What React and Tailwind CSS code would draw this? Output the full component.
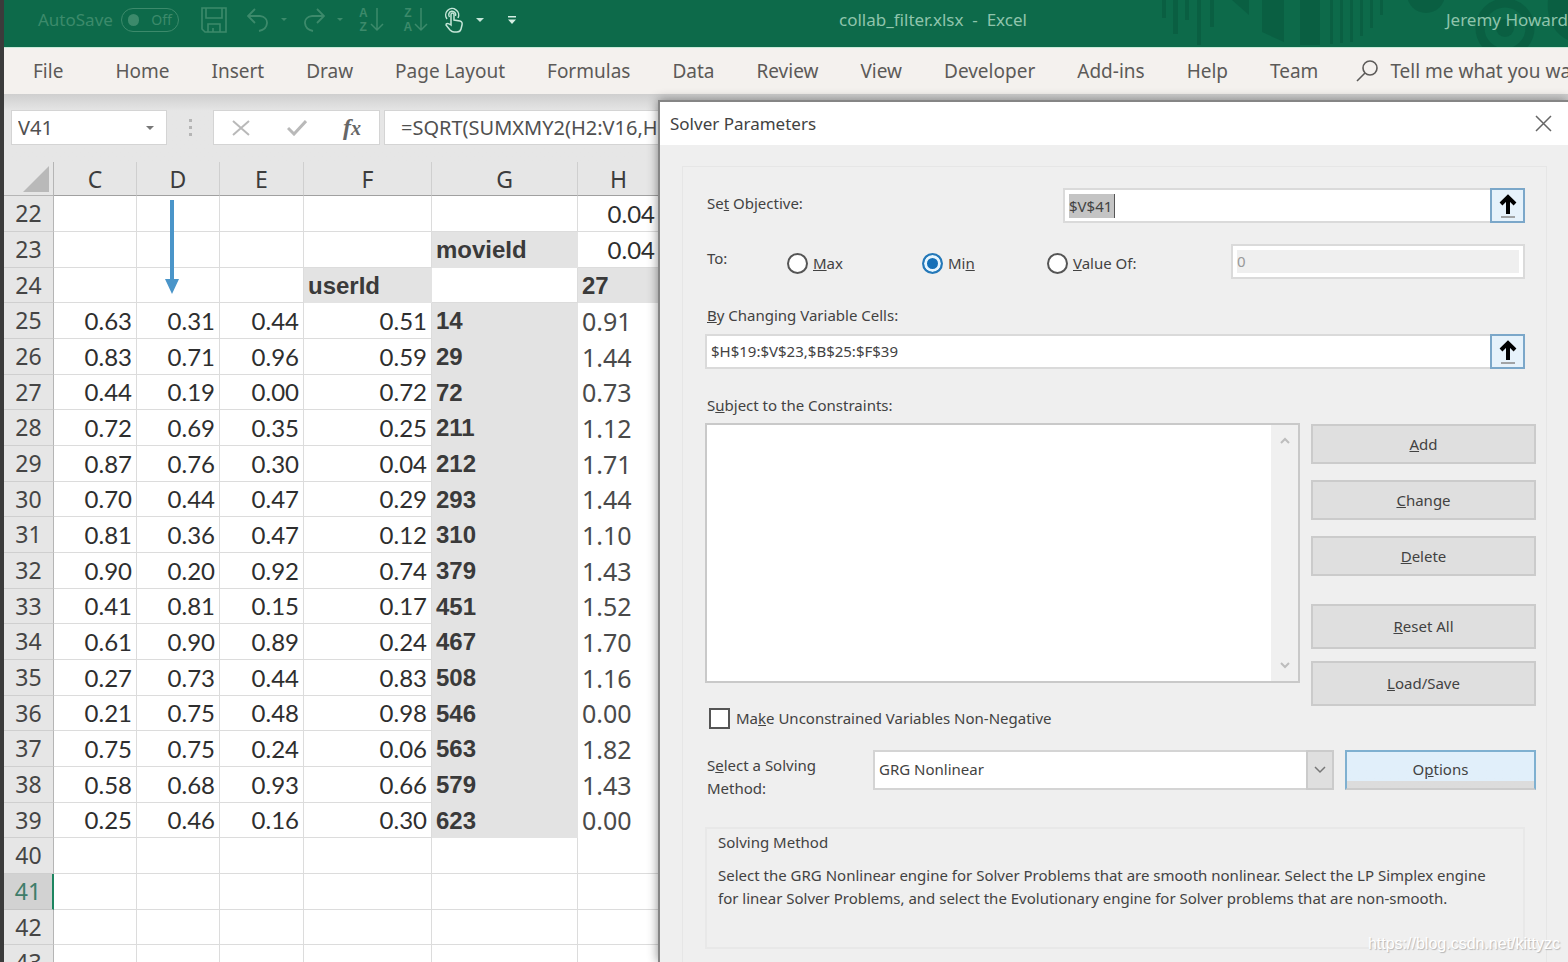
import { useState } from "react";

const tabs = [
  "Home",
  "Insert",
  "Draw",
  "Page Layout",
  "Formulas",
  "Data",
  "Review",
  "View",
  "Developer",
  "Add-ins",
  "Help",
  "Team",
];

const columns = [
  { name: "C", width: "w-[83px]" },
  { name: "D", width: "w-[83px]" },
  { name: "E", width: "w-[84px]" },
  { name: "F", width: "w-[128px]" },
  { name: "G", width: "w-[146px]" },
  { name: "H", width: "w-[82px]" },
];

// row number, then cells C to H
const rows = [
  [22, "", "", "", "", "", "0.04"],
  [23, "", "", "", "", "movieId", "0.04"],
  [24, "", "", "", "userId", "", "27"],
  [25, "0.63", "0.31", "0.44", "0.51", "14", "0.91"],
  [26, "0.83", "0.71", "0.96", "0.59", "29", "1.44"],
  [27, "0.44", "0.19", "0.00", "0.72", "72", "0.73"],
  [28, "0.72", "0.69", "0.35", "0.25", "211", "1.12"],
  [29, "0.87", "0.76", "0.30", "0.04", "212", "1.71"],
  [30, "0.70", "0.44", "0.47", "0.29", "293", "1.44"],
  [31, "0.81", "0.36", "0.47", "0.12", "310", "1.10"],
  [32, "0.90", "0.20", "0.92", "0.74", "379", "1.43"],
  [33, "0.41", "0.81", "0.15", "0.17", "451", "1.52"],
  [34, "0.61", "0.90", "0.89", "0.24", "467", "1.70"],
  [35, "0.27", "0.73", "0.44", "0.83", "508", "1.16"],
  [36, "0.21", "0.75", "0.48", "0.98", "546", "0.00"],
  [37, "0.75", "0.75", "0.24", "0.06", "563", "1.82"],
  [38, "0.58", "0.68", "0.93", "0.66", "579", "1.43"],
  [39, "0.25", "0.46", "0.16", "0.30", "623", "0.00"],
  [40, "", "", "", "", "", ""],
  [41, "", "", "", "", "", ""],
  [42, "", "", "", "", "", ""],
  [43, "", "", "", "", "", ""],
];

const LABEL =
  "border-0 bg-[#e3e3e3] pl-1 text-left font-['Liberation_Sans',sans-serif] text-2xl font-bold text-[#3a3a3a]";
const RESULT = "border-0 bg-white pl-1 text-left font-['Noto_Sans',sans-serif] text-[25px] text-[#4a4a4a]";
const NUMBER =
  "border-r border-b border-[#dcdcdc] pr-1 text-right font-[Lato,sans-serif] text-2xl text-[#2e2e2e]";

function cellClass(row, col) {
  if (row === 24 && (col === 3 || col === 5)) return LABEL;
  if (row >= 25 && row <= 39 && col === 5) return RESULT;
  if (row === 23 && col === 4) return LABEL;
  if (row >= 25 && row <= 39 && col === 4) return LABEL;
  return NUMBER;
}

function Caret({ className }) {
  return (
    <svg className={className} width="8" height="4" viewBox="0 0 8 4" fill="currentColor">
      <path d="M0 0h8L4 4z" />
    </svg>
  );
}

function SortIcon({ top, bottom }) {
  return (
    <span className="flex items-center gap-0.5">
      <span className="flex flex-col font-['Liberation_Sans',sans-serif] text-xs leading-[14px] font-bold">
        <span>{top}</span>
        <span>{bottom}</span>
      </span>
      <svg width="14" height="26" viewBox="0 0 14 26" fill="none" stroke="currentColor" strokeWidth="1.5">
        <path d="M7 1v22M1 17l6 6 6-6" />
      </svg>
    </span>
  );
}

function TitlePattern() {
  return (
    <svg
      className="absolute top-0 right-0"
      width="418"
      height="47"
      viewBox="0 0 418 47"
      fill="#095c40"
      opacity="0.75"
    >
      <path d="M12 0h4v18h-4zM23 0h5v34h-5zM35 0h4v20h-4zM47 0h4v45h-4zM60 0h4v27h-4z" />
      <path d="M82 0h17v15z" />
      <path d="M112 0h22v42l-22-10zM150 0h20v45h-20z" />
      <path d="M180 0h3v44h-3zM190 0h3v43h-3zM200 0h3v42h-3zM210 0h3v36h-3zM220 0h3v28h-3zM230 0h3v15h-3z" />
      <circle cx="276" cy="-6" r="19" />
      <circle cx="355" cy="28" r="25" fill="none" stroke="#095c40" strokeWidth="9" />
      <circle cx="355" cy="28" r="9" />
      <path d="M398 0h20v40c-14-6-22-22-20-40z" />
    </svg>
  );
}

function TitleBar() {
  return (
    <header className="relative flex h-[47px] shrink-0 items-center bg-[#0d6a4a] pb-2 pl-[34px] text-[#3c8a6b]">
      <TitlePattern />
      <span className="text-[17px]">AutoSave</span>
      <button
        type="button"
        aria-label="AutoSave"
        className="ml-2 flex h-6 w-[58px] items-center gap-3 rounded-full border border-current px-1.5 text-sm"
      >
        <span className="size-3 rounded-full bg-current" />
        Off
      </button>
      <button type="button" aria-label="Save" className="ml-[22px]">
        <svg width="26" height="26" viewBox="0 0 26 26" fill="none" stroke="currentColor" strokeWidth="1.6">
          <path d="M1 1h24v24H4l-3-3zM5 1v10h16V1M7 25v-8h12v8M12 25v-4" />
        </svg>
      </button>
      <button type="button" aria-label="Undo" className="ml-5 flex items-center gap-3">
        <svg width="22" height="24" viewBox="0 0 22 24" fill="none" stroke="currentColor" strokeWidth="1.8">
          <path d="M8 1L1 8l7 7M1 8h12c10 1 9 13-1 15" />
        </svg>
        <Caret className="h-[3px] w-1.5" />
      </button>
      <button type="button" aria-label="Redo" className="ml-4 flex items-center gap-3">
        <svg width="22" height="24" viewBox="0 0 22 24" fill="none" stroke="currentColor" strokeWidth="1.8">
          <path d="M14 1l7 7-7 7M21 8H9c-10 1-9 13 1 15" />
        </svg>
        <Caret className="h-[3px] w-1.5" />
      </button>
      <button type="button" aria-label="Sort ascending" className="ml-4">
        <SortIcon top="A" bottom="Z" />
      </button>
      <button type="button" aria-label="Sort descending" className="ml-5">
        <SortIcon top="Z" bottom="A" />
      </button>
      <button type="button" aria-label="Touch mode" className="ml-4 flex items-center gap-3 text-[#c5e6d8]">
        <svg width="20" height="26" viewBox="0 0 20 26" fill="none" stroke="currentColor" strokeWidth="1.5">
          <path d="M3 12a6.500 6.500 0 1 1 11-1" />
          <path d="M5.500 10a3.500 3.500 0 1 1 6-1" />
          <path d="M7 17V7.500a1.500 1.500 0 0 1 3 0V13l6 1c2 .5 2.500 2 2 4l-1 4c-.5 2-2 3-4 3h-3c-2 0-3-1-4-2l-4-5c0-2 2-2 5 0z" />
        </svg>
        <Caret />
      </button>
      <button type="button" aria-label="Customize toolbar" className="ml-6 text-[#d5efe4]">
        <svg width="8" height="8" viewBox="0 0 8 8" fill="currentColor">
          <path d="M0 0h8v1.500H0zM0 3.500h8L4 8z" />
        </svg>
      </button>
      <h1 className="absolute left-[835px] text-[17px] whitespace-pre text-[#8fc4ac]">
        collab_filter.xlsx  -  Excel
      </h1>
      <span className="absolute right-0 text-[17px] text-[#8fc4ac]">Jeremy Howard</span>
    </header>
  );
}

function Ribbon() {
  return (
    <nav className="flex h-[47px] shrink-0 items-center border-t border-[#c9ead9] bg-[#f4f1ee] pl-[29px] text-[19px] whitespace-nowrap text-[#5c5a58]">
      <button type="button" className="mr-13">
        File
      </button>
      <div className="flex gap-[42px]">
        {tabs.map((tab) => (
          <button key={tab} type="button">
            {tab}
          </button>
        ))}
      </div>
      <button type="button" className="ml-[38px] flex items-center gap-3">
        <svg width="22" height="22" viewBox="0 0 22 22" fill="none" stroke="currentColor" strokeWidth="1.6">
          <circle cx="14" cy="8" r="7" />
          <path d="M9 13l-8 8" />
        </svg>
        Tell me what you want to do
      </button>
    </nav>
  );
}

function FormulaBar() {
  return (
    <div className="flex h-[68px] shrink-0 items-start bg-linear-to-b from-[#cfcfcf] to-[#e6e6e6] to-25% pt-4 pl-[7px] text-xl text-[#505050]">
      <div className="flex h-[35px] w-[156px] items-center justify-between border border-[#d4d4d4] bg-white pr-3 pl-1.5">
        <input aria-label="Name box" defaultValue="V41" className="w-24 outline-none" />
        <Caret className="text-[#777]" />
      </div>
      <div className="flex h-[35px] w-[46px] flex-col items-center justify-center gap-1">
        <span className="size-[3px] bg-[#b5b5b5]" />
        <span className="size-[3px] bg-[#b5b5b5]" />
        <span className="size-[3px] bg-[#b5b5b5]" />
      </div>
      <div className="flex h-[35px] w-[167px] items-center justify-between border border-[#d4d4d4] bg-white px-[18px] text-[#b9b9b9]">
        <button type="button" aria-label="Cancel">
          <svg width="18" height="16" viewBox="0 0 18 16" fill="none" stroke="currentColor" strokeWidth="2">
            <path d="M1 1l16 14M17 1L1 15" />
          </svg>
        </button>
        <button type="button" aria-label="Enter">
          <svg width="20" height="16" viewBox="0 0 20 16" fill="none" stroke="currentColor" strokeWidth="3">
            <path d="M1 8l6 6L19 1" />
          </svg>
        </button>
        <button
          type="button"
          aria-label="Insert function"
          className="font-['Liberation_Serif',serif] text-2xl leading-none font-bold text-[#666] italic"
        >
          f<span className="text-xl">x</span>
        </button>
      </div>
      <input
        aria-label="Formula"
        defaultValue="=SQRT(SUMXMY2(H2:V16,H25:V39)/COUNT(H2:V16))"
        className="ml-1 h-[35px] flex-1 border border-[#d4d4d4] bg-white pl-4 outline-none"
      />
    </div>
  );
}

function Sheet() {
  return (
    <main className="relative flex-1 overflow-hidden bg-white">
      <table className="w-[656px] table-fixed border-separate border-spacing-0">
        <thead>
          <tr className="h-[34px] bg-[#e6e6e6] text-[23px] leading-8 text-[#3c3c3c]">
            <th className="w-[50px] border-r border-b border-[#b5b5b5] p-0">
              <svg className="ml-[19px]" width="26" height="26" viewBox="0 0 26 26" fill="#b9b9b9">
                <path d="M26 0v26H0z" />
              </svg>
            </th>
            {columns.map((column) => (
              <th
                key={column.name}
                className={`${column.width} border-r border-b border-r-[#cfcfcf] border-b-[#a0a0a0] p-0 font-normal`}
              >
                {column.name}
              </th>
            ))}
          </tr>
        </thead>
        <tbody>
          {rows.map(([number, ...cells], i) => (
            <tr key={number} className={i % 3 === 2 ? "h-[35px]" : "h-9"}>
              <th
                className={
                  number === 41
                    ? "border-r-2 border-b border-r-[#1d8560] border-b-[#c4c4c4] bg-[#d2d2d2] p-0 text-[23px] leading-none font-normal text-[#3f7d6a]"
                    : "border-r border-b border-r-[#b5b5b5] border-b-[#cfcfcf] bg-[#e6e6e6] p-0 text-[23px] leading-none font-normal text-[#454545]"
                }
              >
                {number}
              </th>
              {cells.map((cell, col) => (
                <td key={col} className={`p-0 leading-none ${cellClass(number, col)}`}>
                  {cell}
                </td>
              ))}
            </tr>
          ))}
        </tbody>
      </table>
      {/* arrow drawn on top of column D */}
      <svg className="absolute top-[38px] left-[161px]" width="14" height="94" viewBox="0 0 14 94" fill="#4a95c9">
        <path d="M5 0h4v79h5L7 94 0 79h5z" />
      </svg>
    </main>
  );
}

function RefButton({ label }) {
  return (
    <button
      type="button"
      aria-label={label}
      className="flex w-[35px] items-center justify-center border-2 border-[#7ba7c9] bg-[#e6f2fb]"
    >
      <svg width="18" height="24" viewBox="0 0 18 24" fill="none" stroke="#000">
        <path d="M9 20V3M2 10l7-7 7 7" strokeWidth="4" />
        <path d="M2 23h14" stroke="#888" strokeWidth="1.500" />
      </svg>
    </button>
  );
}

function DialogButton({ className, children }) {
  return (
    <button type="button" className={`border-2 border-[#cbcbcb] bg-[#dfdfdf] ${className}`}>
      {children}
    </button>
  );
}

function Radio({ id, checked, onChange, className, children }) {
  return (
    <span className={`flex items-center gap-[5px] pt-1 ${className}`}>
      <input
        type="radio"
        id={id}
        name="target"
        checked={checked}
        onChange={onChange}
        className="size-[21px] appearance-none rounded-full border-2 border-[#555] bg-white checked:border-[#2478b8] checked:bg-[#1470b8] checked:shadow-[inset_0_0_0_3px_#e6f6ff]"
      />
      <label htmlFor={id}>{children}</label>
    </span>
  );
}

function SolverDialog() {
  const [target, setTarget] = useState("min");
  const [nonNegative, setNonNegative] = useState(false);

  return (
    <section
      role="dialog"
      aria-labelledby="solver-title"
      className="absolute top-[100px] right-0 bottom-0 left-[654px] flex flex-col overflow-hidden border-t-2 border-l-2 border-[#858585] bg-[#efefef] text-[15px] text-[#424242] shadow-[0_0_10px_rgba(0,0,0,0.45)]"
    >
      <div className="flex h-[43px] shrink-0 items-center justify-between bg-white pr-4 pl-2.5">
        <h2 id="solver-title" className="text-[17px]">
          Solver Parameters
        </h2>
        <button type="button" aria-label="Close">
          <svg width="17" height="17" viewBox="0 0 17 17" fill="none" stroke="#666" strokeWidth="1.500">
            <path d="M1 1l15 15M16 1L1 16" />
          </svg>
        </button>
      </div>

      <div className="mt-[21px] mr-[21px] ml-[22px] flex-1 border border-b-0 border-[#e6e6e6] pt-[21px] pr-2.5 pl-[22px]">
        <div className="mr-[11px] flex h-[35px]">
          <label htmlFor="objective" className="flex-1 pt-1 pl-0.5">
            Se<u>t</u> Objective:
          </label>
          <div className="flex w-[462px]">
            <div className="flex flex-1 items-center border-2 border-r-0 border-[#dadada] bg-white px-1">
              <input
                id="objective"
                defaultValue="$V$41"
                className="h-6 w-[46px] border-r border-[#555] bg-[#c4c4c4] outline-none"
              />
            </div>
            <RefButton label="Pick objective cell" />
          </div>
        </div>

        <div className="mt-[21px] mr-[11px] flex h-[35px] items-center">
          <span className="w-[82px] pb-1.5 pl-0.5">To:</span>
          <Radio id="max" className="w-[135px]" checked={target === "max"} onChange={() => setTarget("max")}>
            <u>M</u>ax
          </Radio>
          <Radio id="min" className="w-[125px]" checked={target === "min"} onChange={() => setTarget("min")}>
            Mi<u>n</u>
          </Radio>
          <Radio id="value" className="flex-1" checked={target === "value"} onChange={() => setTarget("value")}>
            <u>V</u>alue Of:
          </Radio>
          <div className="flex h-[35px] w-[294px] border-2 border-[#dadada] bg-white p-1">
            <input
              aria-label="Target value"
              disabled
              defaultValue="0"
              className="w-full bg-[#efefef] text-[#999]"
            />
          </div>
        </div>

        <label htmlFor="cells" className="mt-6 block pl-0.5 leading-6">
          <u>B</u>y Changing Variable Cells:
        </label>
        <div className="mt-[7px] mr-[11px] flex h-[35px]">
          <input
            id="cells"
            defaultValue="$H$19:$V$23,$B$25:$F$39"
            className="flex-1 border-2 border-r-0 border-[#dadada] bg-white pl-1 outline-none"
          />
          <RefButton label="Pick variable cells" />
        </div>

        <p id="constraints-label" className="mt-6 pl-0.5 leading-6">
          S<u>u</u>bject to the Constraints:
        </p>
        <div className="mt-[6px] flex gap-[11px]">
          <div className="flex h-[260px] flex-1 border-2 border-[#c9c9c9] bg-white">
            <ul role="listbox" aria-labelledby="constraints-label" className="flex-1" />
            <div className="flex w-[27px] flex-col items-center justify-between bg-[#f0f0f0] py-3 text-[#bdbdbd]">
              <button type="button" aria-label="Scroll up">
                <svg width="10" height="7" viewBox="0 0 10 7" fill="none" stroke="currentColor" strokeWidth="2">
                  <path d="M1 6l4-4 4 4" />
                </svg>
              </button>
              <button type="button" aria-label="Scroll down">
                <svg width="10" height="7" viewBox="0 0 10 7" fill="none" stroke="currentColor" strokeWidth="2">
                  <path d="M1 1l4 4 4-4" />
                </svg>
              </button>
            </div>
          </div>
          <div className="flex w-[225px] flex-col pt-px">
            <DialogButton className="h-10">
              <u>A</u>dd
            </DialogButton>
            <DialogButton className="mt-4 h-10">
              <u>C</u>hange
            </DialogButton>
            <DialogButton className="mt-4 h-10">
              <u>D</u>elete
            </DialogButton>
            <DialogButton className="mt-7 h-[45px]">
              <u>R</u>eset All
            </DialogButton>
            <DialogButton className="mt-3 h-[45px]">
              <u>L</u>oad/Save
            </DialogButton>
          </div>
        </div>

        <div className="mt-px flex items-center gap-1.5 pl-1">
          <input
            type="checkbox"
            id="non-negative"
            checked={nonNegative}
            onChange={(e) => setNonNegative(e.target.checked)}
            className="size-[21px] appearance-none border-2 border-[#555] bg-white checked:bg-[#2478b8]"
          />
          <label htmlFor="non-negative">
            Ma<u>k</u>e Unconstrained Variables Non-Negative
          </label>
        </div>

        <div className="mt-5 flex items-start">
          <label htmlFor="method" className="w-[168px] pt-1 pl-0.5 leading-[23px]">
            S<u>e</u>lect a Solving
            <br />
            Method:
          </label>
          <div className="relative flex h-10 flex-1">
            <select
              id="method"
              defaultValue="grg"
              className="w-full appearance-none border-2 border-[#d4d4d4] bg-white pl-1 outline-none"
            >
              <option value="grg">GRG Nonlinear</option>
              <option value="lp">Simplex LP</option>
              <option value="evo">Evolutionary</option>
            </select>
            <span className="pointer-events-none absolute inset-y-0 right-0 flex w-7 items-center justify-center border-2 border-[#cbcbcb] bg-[#dfdfdf]">
              <svg width="12" height="8" viewBox="0 0 12 8" fill="none" stroke="#777" strokeWidth="1.500">
                <path d="M1 1l5 5 5-5" />
              </svg>
            </span>
          </div>
          <button
            type="button"
            className="ml-[11px] h-10 w-[191px] border-2 border-[#7fb0d0] border-b-[#cbcbcb] bg-linear-to-b from-[#e1effa] from-80% to-[#dcdcdc] to-80%"
          >
            O<u>p</u>tions
          </button>
        </div>

        <div className="mt-[27px] mr-[11px] h-[122px] border-2 border-[#e8e8e8] pt-0.5 pr-5 pl-[11px] leading-[23px]">
          <h3>Solving Method</h3>
          <p className="mt-2.5">
            Select the GRG Nonlinear engine for Solver Problems that are smooth nonlinear. Select the LP Simplex engine
            for linear Solver Problems, and select the Evolutionary engine for Solver problems that are non-smooth.
          </p>
        </div>
      </div>
    </section>
  );
}

export default function App() {
  return (
    <div className="relative flex h-screen flex-col overflow-hidden border-l-4 border-[#3b3b3b] bg-[#e6e6e6] font-['Noto_Sans',sans-serif]">
      <TitleBar />
      <Ribbon />
      <FormulaBar />
      <Sheet />
      <SolverDialog />
      <span className="absolute right-2 bottom-2 font-['Liberation_Sans',sans-serif] text-base leading-5 text-white [text-shadow:1px_1px_1px_#b5b5b5]">
        https://blog.csdn.net/kittyzc
      </span>
    </div>
  );
}
